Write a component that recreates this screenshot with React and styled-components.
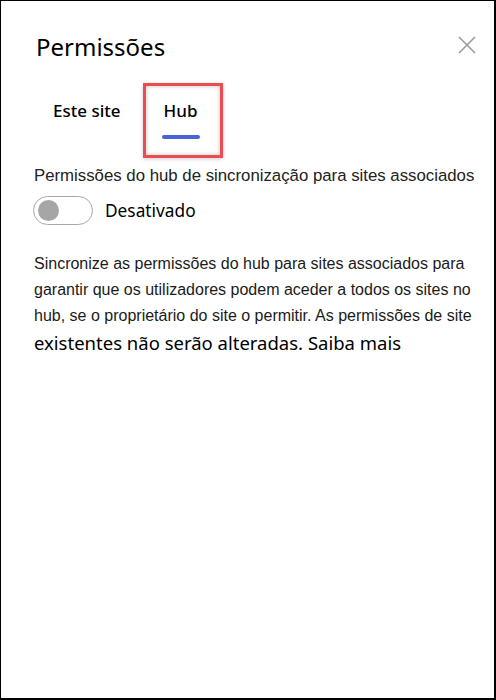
import styled, { createGlobalStyle } from 'styled-components';

const GlobalStyle = createGlobalStyle`
  html, body {
    margin: 0;
    padding: 0;
    background: #fff;
  }
`;

const Frame = styled.div`
  box-sizing: border-box;
  width: 496px;
  height: 700px;
  border-style: solid;
  border-color: #000;
  border-width: 1px 2px 2px 1px;
  background: #fff;
  display: flex;
  flex-direction: column;
  font-family: "Liberation Sans", Arial, sans-serif;
  color: #1b1b1b;
`;

const Header = styled.header`
  display: flex;
  align-items: flex-start;
  justify-content: space-between;
  padding: 31px 14px 0 35px;
`;

const Title = styled.h1`
  margin: 0;
  font-family: "Noto Sans", sans-serif;
  font-weight: 400;
  font-size: 24px;
  line-height: 30px;
  color: #000;
`;

const CloseButton = styled.button`
  border: none;
  background: none;
  padding: 4px;
  cursor: pointer;
  display: flex;
`;

const Tabs = styled.nav`
  display: flex;
  align-items: flex-start;
  padding: 37px 0 0 44px;
`;

const HighlightBox = styled.div`
  box-sizing: border-box;
  width: 80px;
  height: 75px;
  margin: -16px 0 0 14px;
  border: 3px solid #ee4b50;
  box-shadow: inset 0 0 4px rgba(0, 0, 0, 0.25), 0 1px 4px rgba(0, 0, 0, 0.2);
  padding: 13px 0 0 10px;
`;

const Tab = styled.div`
  display: flex;
  flex-direction: column;
  align-items: flex-start;
  padding: 0 8px;
  font-family: "Noto Sans", sans-serif;
  font-size: 17px;
  line-height: 24px;
  color: #000;
  font-weight: 500;
`;

const Underline = styled.span`
  display: block;
  width: 38px;
  height: 4px;
  border-radius: 2px;
  background: #4b63d6;
  margin: 12px 0 0 -2px;
`;

const Body = styled.section`
  padding: 8px 20px 0 32px;
`;

const Label = styled.p`
  margin: 0 0 0 1px;
  font-size: 16.8px;
  line-height: 20px;
  white-space: nowrap;
  color: #222;
`;

const ToggleRow = styled.div`
  display: flex;
  align-items: center;
  gap: 12px;
  margin-top: 10px;
`;

const Switch = styled.span`
  box-sizing: border-box;
  width: 60px;
  height: 29px;
  border: 1.5px solid #a8a8a8;
  border-radius: 15px;
  display: flex;
  align-items: center;
  padding-left: 4px;
`;

const Knob = styled.span`
  width: 21px;
  height: 21px;
  border-radius: 50%;
  background: #a6a6a6;
`;

const ToggleText = styled.span`
  font-family: "Noto Sans", sans-serif;
  font-size: 17.3px;
  color: #000;
`;

const Paragraph = styled.p`
  margin: 26px 0 0 1px;
  font-size: 16px;
  line-height: 26px;
  color: #1b1b1b;
`;

const Line = styled.span`
  display: block;
  white-space: nowrap;
  font-family: ${p => (p.$alt ? '"Noto Sans", sans-serif' : 'inherit')};
  font-size: ${p => (p.$alt ? '18.5px' : 'inherit')};
  line-height: ${p => (p.$alt ? '28px' : 'inherit')};
  color: ${p => (p.$alt ? '#000' : 'inherit')};
`;

const CloseIcon = () => (
  <svg width="18" height="18" viewBox="0 0 18 18">
    <path d="M1 1 L17 17 M17 1 L1 17" stroke="#9a9a9a" strokeWidth="1.6" fill="none" />
  </svg>
);

const App = () => (
  <>
    <GlobalStyle />
    <Frame>
      <Header>
        <Title>Permissões</Title>
        <CloseButton aria-label="Fechar">
          <CloseIcon />
        </CloseButton>
      </Header>
      <Tabs>
        <Tab>Este site</Tab>
        <HighlightBox>
          <Tab>
            Hub
            <Underline />
          </Tab>
        </HighlightBox>
      </Tabs>
      <Body>
        <Label>Permissões do hub de sincronização para sites associados</Label>
        <ToggleRow>
          <Switch>
            <Knob />
          </Switch>
          <ToggleText>Desativado</ToggleText>
        </ToggleRow>
        <Paragraph>
          <Line>Sincronize as permissões do hub para sites associados para</Line>
          <Line>garantir que os utilizadores podem aceder a todos os sites no</Line>
          <Line>hub, se o proprietário do site o permitir. As permissões de site</Line>
          <Line $alt>existentes não serão alteradas. Saiba mais</Line>
        </Paragraph>
      </Body>
    </Frame>
  </>
);

export default App;
